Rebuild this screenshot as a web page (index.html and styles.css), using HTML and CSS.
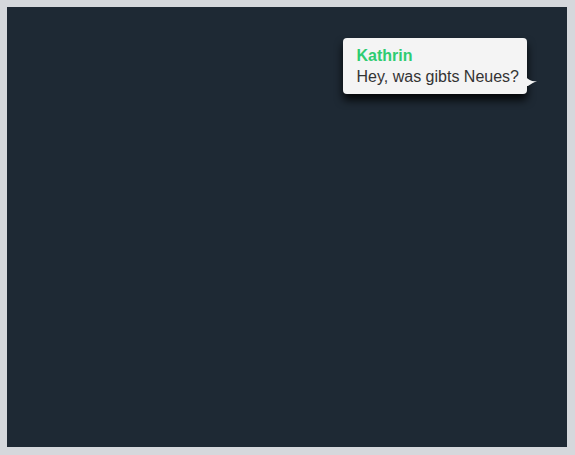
FILE: index.html
```html
<!DOCTYPE html>
<html>
<head>
<meta charset="utf-8">
<link rel="stylesheet" href="styles.css">
</head>
<body>
<div class="canvas">
  <div class="bubble">
    <div class="name">Kathrin</div>
    <div class="msg">Hey, was gibts Neues?</div>
    <svg class="tail" width="12" height="9" viewBox="0 0 12 9"><path d="M0 0 Q4 5 11 4 Q6 6 2 9 L0 9 Z" fill="#f4f4f4"/></svg>
  </div>
</div>
</body>
</html>
```
FILE: styles.css
```css
html, body {
  margin: 0;
  padding: 0;
  background: #d5d8dc;
}
body {
  width: 575px;
  height: 455px;
  overflow: hidden;
}
.canvas {
  margin: 7px;
  width: 560px;
  height: 440px;
  background: #1e2934;
  display: flex;
  justify-content: flex-end;
  align-items: flex-start;
  padding: 31px 40px 0 0;
  box-sizing: border-box;
}
.bubble {
  position: relative;
  background: #f4f4f4;
  border-radius: 4px;
  padding: 7px 8px 7px 14px;
  font-family: "Liberation Sans", Arial, sans-serif;
  font-size: 16px;
  line-height: 21px;
  box-shadow: 0 6px 8px rgba(0,0,0,0.85);
}
.name {
  color: #2ecc71;
  font-weight: bold;
}
.msg {
  color: #333333;
}
.tail {
  position: absolute;
  right: -11px;
  bottom: 8px;
  display: block;
}
```
